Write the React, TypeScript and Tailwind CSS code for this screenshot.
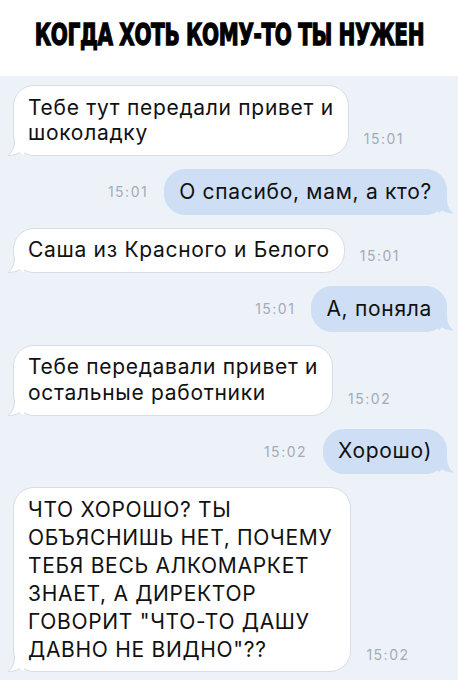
import React from 'react';

type Msg = {
  side: 'in' | 'out';
  lines: string[];
  time: string;
  box?: string;
};

const messages: Msg[] = [
  { side: 'in', lines: ['Тебе тут передали привет и', 'шоколадку'], time: '15:01' },
  { side: 'out', lines: ['О спасибо, мам, а кто?'], time: '15:01' },
  { side: 'in', lines: ['Саша из Красного и Белого'], time: '15:01' },
  { side: 'out', lines: ['А, поняла'], time: '15:01' },
  { side: 'in', lines: ['Тебе передавали привет и', 'остальные работники'], time: '15:02' },
  { side: 'out', lines: ['Хорошо)'], time: '15:02' },
  {
    side: 'in',
    lines: [
      'ЧТО ХОРОШО? ТЫ',
      'ОБЪЯСНИШЬ НЕТ, ПОЧЕМУ',
      'ТЕБЯ ВЕСЬ АЛКОМАРКЕТ',
      'ЗНАЕТ, А ДИРЕКТОР',
      'ГОВОРИТ "ЧТО-ТО ДАШУ',
      'ДАВНО НЕ ВИДНО"??',
    ],
    time: '15:02',
    box: 'leading-[28px] pt-[8px] pb-[7px] pr-[18px]',
  },
];

const InTail = () => (
  <svg className="absolute -left-[6px] bottom-[-1px]" width="16" height="16" viewBox="0 0 16 16">
    <path d="M7 0 C7 7 5 12 0 15.5 C5 15.5 9 14.5 12 12.5 L16 15.5 L16 0 Z" fill="#ffffff" />
    <path d="M6.5 0 C6.5 7 4.5 12 0 15.5 C5 15.5 9 14.5 12 12.5" fill="none" stroke="#d6dde6" strokeWidth="1" />
  </svg>
);

const OutTail = () => (
  <svg className="absolute -right-[8px] bottom-0" width="16" height="16" viewBox="0 0 16 16">
    <path d="M9 0 C9 7 11 12 16 15.5 C11 15.5 7 14.5 4 12.5 L0 15.5 L0 0 Z" fill="#cedff5" />
  </svg>
);

const Bubble = ({ msg }: { msg: Msg }) => {
  const isIn = msg.side === 'in';
  return (
    <div
      className={`relative rounded-[21px] px-[14px] text-[21px] tracking-[0.7px] text-[#111] whitespace-nowrap ${
        msg.box ?? 'leading-[25.5px] pt-[8.5px] pb-[9.5px]'
      } ${isIn ? 'bg-white border border-[#d6dde6]' : 'bg-[#cedff5] border border-[#cedff5]'}`}
    >
      {isIn ? <InTail /> : <OutTail />}
      <div className="relative">
        {msg.lines.map((l, i) => (
          <div key={i}>{l}</div>
        ))}
      </div>
    </div>
  );
};

const Time = ({ t, className }: { t: string; className: string }) => (
  <span className={`text-[14px] tracking-[1.5px] text-[#a4abb5] ${className}`}>{t}</span>
);

export default function App() {
  return (
    <div className="w-[458px] h-[680px] overflow-hidden bg-white" style={{ fontFamily: 'Inter, "Open Sans", sans-serif' }}>
      <div className="h-[76px] flex justify-center pt-[19px]">
        <h1
          className="inline-block text-[31px] font-bold text-black tracking-[-0.5px] leading-none whitespace-nowrap scale-x-[0.72] [-webkit-text-stroke:1.3px_black]"
          style={{ fontFamily: '"DejaVu Sans Condensed", "DejaVu Sans", sans-serif' }}
        >
          КОГДА ХОТЬ КОМУ-ТО ТЫ НУЖЕН
        </h1>
      </div>

      <div className="bg-[#edf2f9] h-full pt-[9px] flex flex-col gap-[13px]">
        {messages.map((m, i) =>
          m.side === 'in' ? (
            <div key={i} className="flex items-end pl-[13px]">
              <Bubble msg={m} />
              <Time t={m.time} className="ml-[15px] mb-[7px]" />
            </div>
          ) : (
            <div key={i} className="flex items-center justify-end pr-[11px]">
              <Time t={m.time} className="mr-[16px]" />
              <Bubble msg={m} />
            </div>
          )
        )}
      </div>
    </div>
  );
}
